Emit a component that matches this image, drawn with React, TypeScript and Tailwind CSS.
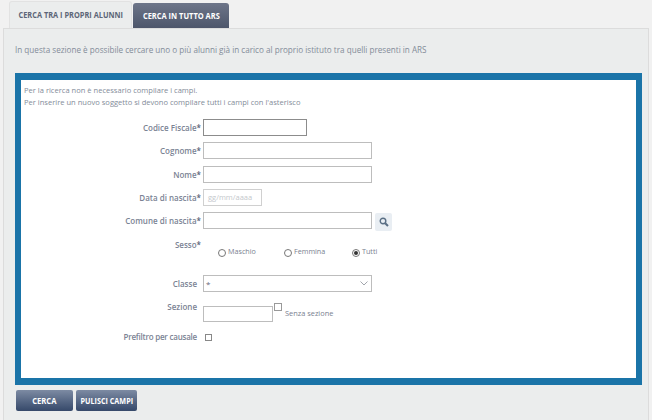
const font = { fontFamily: '"Open Sans", "Noto Sans", sans-serif' };

function Label({ text, star, small }: { text: string; star?: boolean; small?: boolean }) {
  return (
    <div className={`w-[180px] shrink-0 text-right font-semibold leading-[12px] text-[#7b8394] ${small ? "text-[8px] tracking-[-0.22px]" : "text-[8px]"} ${star ? "" : "pr-[4px]"}`}>
      {text}
      {star && <span className="text-[#5a6478]">*</span>}
    </div>
  );
}

function Input({ className }: { className: string }) {
  return <div className={`h-[17px] border border-[#bdbdbd] bg-white ${className}`} />;
}

function Radio({ label, checked, className }: { label: string; checked?: boolean; className: string }) {
  return (
    <div className={`flex items-start ${className}`}>
      <div className="mt-[4px] flex h-[8px] w-[8px] items-center justify-center rounded-full border border-[#777] bg-white">
        {checked && <div className="h-[4px] w-[4px] rounded-full bg-[#333]" />}
      </div>
      <span className="ml-[2px] mt-[2px] text-[7.2px] leading-[9px] text-[#7a8190]">{label}</span>
    </div>
  );
}

export default function App() {
  return (
    <div className="h-[420px] w-[652px] overflow-hidden bg-[#f1f1f1]" style={font}>
      <div className="flex h-[28px] items-end pl-[9px]">
        <div className="flex h-[27px] w-[123px] items-center justify-center rounded-t-[3px] border border-b-0 border-[#e2e2e2] bg-[#ebeded] text-[9px] font-bold text-[#5c6577]">
          <span className="inline-block shrink-0 scale-x-[0.82] whitespace-nowrap">CERCA TRA I PROPRI ALUNNI</span>
        </div>
        <div className="ml-px flex h-[25px] w-[96px] items-center justify-center rounded-t-[3px] bg-gradient-to-b from-[#6d7589] to-[#4d566b] text-[9px] font-bold text-white">
          <span className="inline-block shrink-0 scale-x-[0.83] whitespace-nowrap">CERCA IN TUTTO ARS</span>
        </div>
      </div>
      <div className="ml-[3px] h-[392px] w-[646px] border-l border-r border-t border-[#dcdcdc] bg-[#ebeded] pl-[11px]">
        <p className="pt-[15px] text-[8.15px] leading-[12px] text-[#838c99]">
          In questa sezione è possibile cercare uno o più alunni già in carico al proprio istituto tra quelli presenti in ARS
        </p>
        <div className="mt-[17px] h-[312px] w-[627px] border-x-[6px] border-y-[7px] border-[#1a74a8] bg-white">
          <div className="pl-[3px] pt-[4px] text-[7.56px] leading-[12px] text-[#838c99]">
            <div>Per la ricerca non è necessario compilare i campi.</div>
            <div>Per inserire un nuovo soggetto si devono compilare tutti i campi con l'asterisco</div>
          </div>
          <div className="flex flex-col pt-[11px]">
            <div className="flex h-[17px] items-center gap-[2px]">
              <Label text="Codice Fiscale" star />
              <div className="h-[17px] w-[104px] border border-[#8c8c8c] bg-white" />
            </div>
            <div className="mt-[6px] flex items-center gap-[2px]">
              <Label text="Cognome" star />
              <Input className="w-[169px]" />
            </div>
            <div className="mt-[7px] flex items-center gap-[2px]">
              <Label text="Nome" star />
              <Input className="w-[169px]" />
            </div>
            <div className="mt-[6px] flex items-center gap-[2px]">
              <Label text="Data di nascita" star />
              <div className="flex h-[17px] w-[59px] items-center border border-[#d0d0d0] bg-white pl-[4px] text-[7.5px] text-[#c4c8cc]">
                gg/mm/aaaa
              </div>
            </div>
            <div className="mt-[6px] flex items-start gap-[2px]">
              <div className="mt-[3px]">
                <Label text="Comune di nascita" star />
              </div>
              <Input className="w-[169px]" />
              <div className="ml-[1px] mt-[1px] flex h-[18px] w-[17px] items-center justify-center rounded-[2px] bg-[#e9eef3]">
                <svg width="10" height="10" viewBox="0 0 10 10" fill="none" stroke="#5a6f85">
                  <circle cx="4" cy="4" r="2.8" strokeWidth="1.4" />
                  <path d="M6.2 6.2 9 9" strokeWidth="2" />
                </svg>
              </div>
            </div>
            <div className="mt-[8px] flex h-[29px] items-start gap-[2px]">
              <Label text="Sesso" star />
              <div className="mt-[6px] flex">
                <Radio label="Maschio" className="ml-[15px] w-[66px]" />
                <Radio label="Femmina" className="w-[68px]" />
                <Radio label="Tutti" checked className="" />
              </div>
            </div>
            <div className="mt-[7px] flex items-center gap-[2px]">
              <Label text="Classe" />
              <div className="flex h-[17px] w-[169px] items-center justify-between border border-[#bdbdbd] bg-white pl-[2px] pr-[3px] text-[8px] text-[#667]">
                <span>*</span>
                <svg width="8" height="5" viewBox="0 0 8 5" fill="none" stroke="#8a8f98" strokeWidth="0.8">
                  <path d="M0.5 0.5 4 4 7.5 0.5" />
                </svg>
              </div>
            </div>
            <div className="mt-[9px] flex items-start gap-[2px]">
              <Label text="Sezione" />
              <div className="mt-[5px] h-[16px] w-[70px] border border-[#bdbdbd] bg-white" />
              <div className="ml-[-1px] mt-[2px] h-[8px] w-[8px] border border-[#999] bg-white" />
              <span className="ml-px mt-[6px] text-[7.4px] leading-[12px] text-[#7a8190]">Senza sezione</span>
            </div>
            <div className="mt-[9px] flex items-center gap-[2px]">
              <Label text="Prefiltro per causale" small />
              <div className="ml-[2px] mt-[1px] h-[7px] w-[7px] border border-[#888] bg-white" />
            </div>
          </div>
        </div>
        <div className="ml-px mt-[5px] flex gap-[3px]">
          <div className="flex h-[21px] w-[57px] items-center justify-center rounded-[2px] bg-gradient-to-b from-[#7d8ba3] to-[#36496a] text-[9px] font-bold text-white">
            <span className="inline-block shrink-0 scale-x-[0.85] whitespace-nowrap">CERCA</span>
          </div>
          <div className="flex h-[21px] w-[61px] items-center justify-center rounded-[2px] bg-gradient-to-b from-[#7d8ba3] to-[#36496a] text-[9px] font-bold text-white">
            <span className="inline-block shrink-0 scale-x-[0.8] whitespace-nowrap">PULISCI CAMPI</span>
          </div>
        </div>
      </div>
    </div>
  );
}
